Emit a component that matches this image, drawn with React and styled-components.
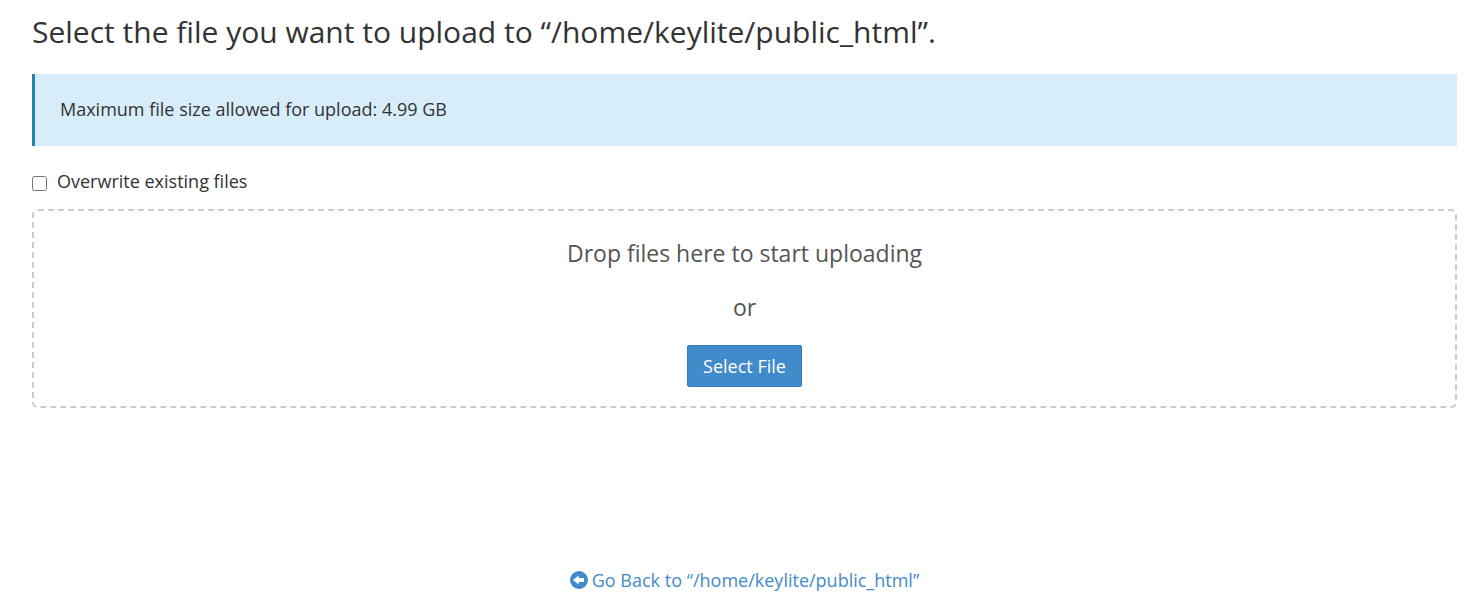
import React, {useState, useRef} from 'react';
import styled, {createGlobalStyle} from 'styled-components';

const GlobalStyle = createGlobalStyle`
  body {
    margin: 0;
    background: #fff;
    color: #333;
    font-family: 'Open Sans', sans-serif;
    font-size: 18px;
    line-height: 26px;
  }
`;

const Page = styled.main`
  padding: 12px 27px 0 32px;
`;

const Title = styled.h1`
  margin: 0 0 22px;
  font-size: 30px;
  font-weight: 400;
  line-height: 40px;
`;

const Callout = styled.div`
  margin-bottom: 22px;
  padding: 22px 25px 24px;
  border-left: 3px solid #2a80b9;
  background: #d7edfa;
`;

const CheckLabel = styled.label`
  display: flex;
  align-items: center;
  gap: 10px;
  margin-bottom: 15px;
`;

const Checkbox = styled.input`
  width: 15px;
  height: 15px;
  margin: 4px 0 0;
`;

const DropZone = styled.section`
  display: flex;
  flex-direction: column;
  align-items: center;
  padding: 25px 20px 19px;
  border: 2px dashed #ccc;
  border-radius: 6px;
`;

const DropText = styled.p`
  margin: 0 0 20px;
  color: #555;
  font-size: 23px;
  line-height: 34px;
`;

const Button = styled.button`
  margin-top: 1px;
  padding: 7px 15px;
  border: 1px solid #357ebd;
  border-radius: 2px;
  background: #428bca;
  color: #fff;
  font: inherit;
  cursor: pointer;

  &:hover {
    background: #3276b1;
  }
`;

const Footer = styled.footer`
  display: flex;
  justify-content: center;
  margin-top: 159px;
`;

const BackLink = styled.a`
  display: flex;
  align-items: center;
  gap: 4px;
  color: #428bca;
  text-decoration: none;

  &:hover {
    text-decoration: underline;
  }
`;

const BackIcon = () => (
  <svg width="18" height="18" viewBox="0 0 18 18" aria-hidden="true">
    <circle cx="9" cy="9" r="9" fill="currentColor" />
    <path d="M3 9L8.6 4.4V7H14V11H8.6V13.6Z" fill="#fff" />
  </svg>
);

const directory = '/home/keylite/public_html';

export default function App () {
  const [overwrite, setOverwrite] = useState(false);
  const picker = useRef(null);

  return (
    <Page>
      <GlobalStyle />
      <Title>Select the file you want to upload to “{directory}”.</Title>
      <Callout>Maximum file size allowed for upload: 4.99 GB</Callout>
      <CheckLabel>
        <Checkbox
          type="checkbox"
          checked={overwrite}
          onChange={e => setOverwrite(e.target.checked)}
        />
        Overwrite existing files
      </CheckLabel>
      <DropZone onDragOver={e => e.preventDefault()} onDrop={e => e.preventDefault()}>
        <DropText>Drop files here to start uploading</DropText>
        <DropText>or</DropText>
        <Button type="button" onClick={() => picker.current.click()}>Select File</Button>
        <input ref={picker} type="file" aria-label="Select File" hidden />
      </DropZone>
      <Footer>
        <BackLink href="#">
          <BackIcon />
          Go Back to “{directory}”
        </BackLink>
      </Footer>
    </Page>
  );
}
